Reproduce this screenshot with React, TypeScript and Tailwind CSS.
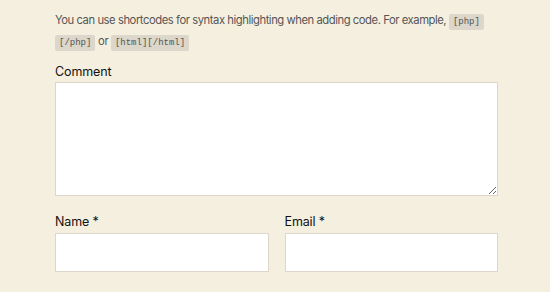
const codeCls =
  "rounded-[2px] bg-[#dcd7ca] px-[4px] py-[3px] font-['Liberation_Mono',monospace] text-[9px] tracking-normal text-[#555]";

export default function App() {
  return (
    <div
      className="min-h-[292px] w-[550px] bg-[#f5efe0] pl-[55px] pr-[52px] pt-[11px] text-[#555]"
      style={{ fontFamily: "Inter, 'Noto Sans', sans-serif" }}
    >
      <p className="text-[11.25px] leading-[19px] tracking-[-0.04em]">
        You can use shortcodes for syntax highlighting when adding code. For example,{" "}
        <code className={codeCls}>[php]</code> <code className={codeCls}>[/php]</code> or{" "}
        <code className={codeCls}>[html][/html]</code>
      </p>

      <div className="mt-[11px] flex flex-col">
        <label className="text-[12.5px] leading-[16px] tracking-[-0.01em] text-[#111]">Comment</label>
        <textarea className="mt-[2px] h-[114px] w-full resize-y border border-[#dcd7ca] bg-white" />
      </div>

      <div className="mt-[18px] flex gap-[16px]">
        <div className="flex flex-1 flex-col">
          <label className="text-[12.5px] leading-[16px] tracking-[-0.01em] text-[#111]">Name *</label>
          <input className="mt-[3px] h-[39px] w-full border border-[#dcd7ca] bg-white" />
        </div>
        <div className="flex flex-1 flex-col">
          <label className="text-[12.5px] leading-[16px] tracking-[-0.01em] text-[#111]">Email *</label>
          <input className="mt-[3px] h-[39px] w-full border border-[#dcd7ca] bg-white" />
        </div>
      </div>
    </div>
  );
}
